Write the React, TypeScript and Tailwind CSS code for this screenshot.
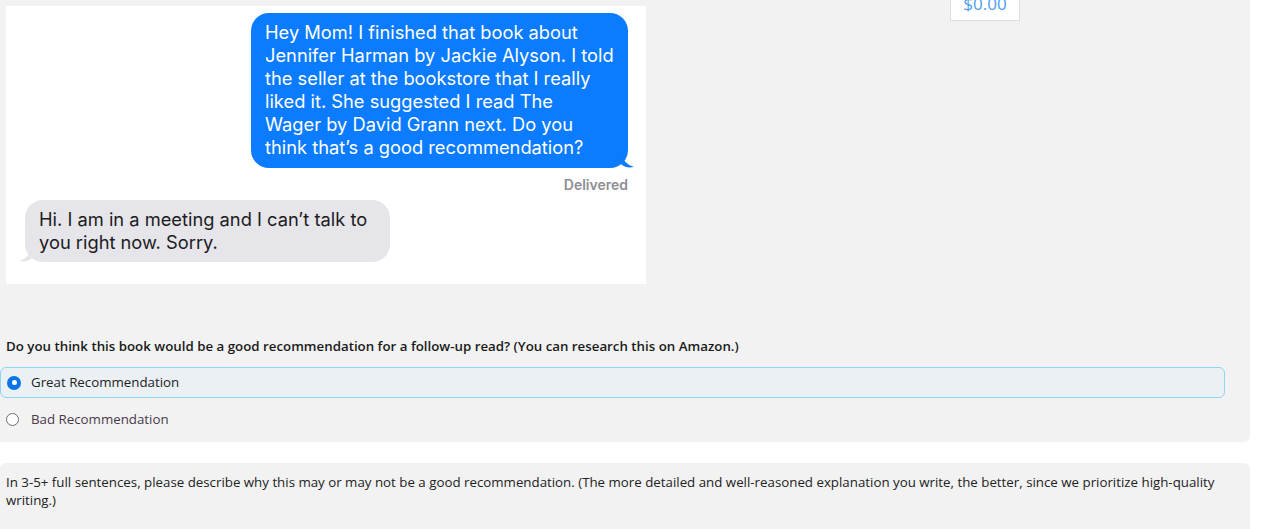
const sans = "font-['Segoe_UI','Open_Sans',sans-serif]";

const outgoing = [
  "Hey Mom! I finished that book about",
  "Jennifer Harman by Jackie Alyson. I told",
  "the seller at the bookstore that I really",
  "liked it. She suggested I read The",
  "Wager by David Grann next. Do you",
  "think that’s a good recommendation?",
];

function ChatShot() {
  return (
    <div className="w-[640px] h-[278px] bg-white relative font-['Inter','Roboto',sans-serif]">
      {/* outgoing bubble */}
      <div className="absolute left-[245px] top-[7px] w-[377px]">
        <div className="relative bg-[#0b7bff] text-white rounded-[18px] pl-[14px] pr-[4px] pt-[8px] pb-[9px] text-[18.3px] leading-[23px] whitespace-nowrap">
          {outgoing.map((l) => (
            <div key={l}>{l}</div>
          ))}
          <svg className="absolute -right-[7px] bottom-0" width="14" height="14" viewBox="0 0 14 14">
            <path d="M0 0 C2 6 6 11 13 13 C7 14 3 13 0 10 Z" fill="#0b7bff" />
          </svg>
        </div>
        <div className="text-right text-[14px] font-semibold text-[#8e8e93] mt-[8px] leading-[18px]">Delivered</div>
      </div>
      {/* incoming bubble */}
      <div className="absolute left-[19px] top-[194px] w-[365px]">
        <div className="relative bg-[#e5e5ea] text-[#1c1c1e] rounded-[18px] pl-[14px] pr-[4px] pt-[8px] pb-[8px] text-[18.3px] leading-[23px] whitespace-nowrap">
          <div>Hi. I am in a meeting and I can’t talk to</div>
          <div>you right now. Sorry.</div>
          <svg className="absolute -left-[7px] bottom-0" width="14" height="14" viewBox="0 0 14 14">
            <path d="M14 0 C12 6 8 11 1 13 C7 14 11 13 14 10 Z" fill="#e5e5ea" />
          </svg>
        </div>
      </div>
    </div>
  );
}

function Radio({ checked }: { checked: boolean }) {
  return checked ? (
    <span className="w-[14px] h-[14px] rounded-full bg-[#0b74e8] flex items-center justify-center shrink-0">
      <span className="w-[5px] h-[5px] rounded-full bg-white" />
    </span>
  ) : (
    <span className="w-[13px] h-[13px] rounded-full border border-[#6e6e6e] bg-white shrink-0" />
  );
}

export default function App() {
  return (
    <div className={`w-[1262px] h-[529px] overflow-hidden bg-white relative ${sans}`}>
      <div className="w-[1250px] h-[442px] bg-[#f2f2f2] rounded-br-[6px] pt-[6px] pl-[6px]">
        <ChatShot />
        <p className="mt-[53px] text-[13.3px] font-semibold text-[#1a1a1a] leading-[18px]">
          Do you think this book would be a good recommendation for a follow-up read? (You can research this on Amazon.)
        </p>
        <div className="-ml-[6px] mt-[12px] w-[1225px] h-[31px] flex items-center gap-[10px] pl-[6px] bg-[#ebf0f5] border border-[#8fd3f5] rounded-[6px]">
          <Radio checked />
          <span className="text-[13.3px] text-[#222]">Great Recommendation</span>
        </div>
        <div className="-ml-[6px] mt-[6px] h-[31px] flex items-center gap-[12px] pl-[6px]">
          <Radio checked={false} />
          <span className="text-[13.3px] text-[#4a3a4a]">Bad Recommendation</span>
        </div>
      </div>

      <div className="absolute left-[950px] -top-[13px] w-[70px] h-[34px] bg-white border border-[#dedede] flex items-center justify-center text-[17px] text-[#4b9ef0]">
        $0.00
      </div>

      <div className="mt-[21px] w-[1250px] h-[80px] bg-[#f2f2f2] rounded-t-[6px] px-[6px] pt-[11px] text-[13.3px] leading-[17.5px] text-[#222]">
        In 3-5+ full sentences, please describe why this may or may not be a good recommendation. (The more detailed and well-reasoned explanation you write, the better, since we prioritize high-quality writing.)
      </div>
    </div>
  );
}
